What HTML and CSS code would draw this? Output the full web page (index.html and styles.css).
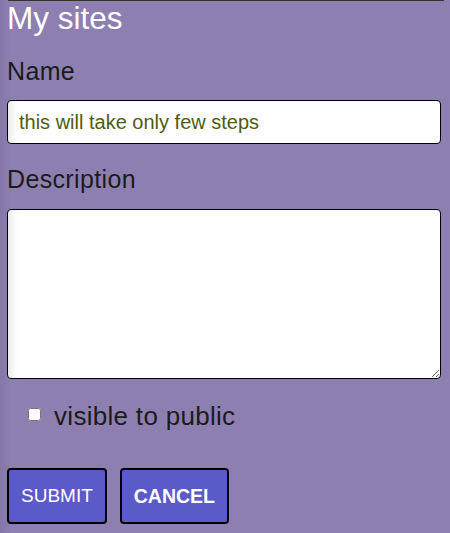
FILE: index.html
```html
<!DOCTYPE html>
<html lang="en">
<head>
<meta charset="utf-8">
<title>My sites</title>
<link rel="stylesheet" href="styles.css">
</head>
<body>
<div class="topline"></div>
<main class="page">
  <h1 class="title">My sites</h1>
  <form class="form">
    <label class="label label-name" for="name">Name</label>
    <input class="field" id="name" type="text" value="this will take only few steps">
    <label class="label label-desc" for="desc">Description</label>
    <textarea class="field area" id="desc"></textarea>
    <div class="check-row">
      <input class="check" id="public" type="checkbox">
      <label class="check-label" for="public">visible to public</label>
    </div>
    <div class="buttons">
      <button class="btn" type="submit">SUBMIT</button>
      <button class="btn btn-bold" type="button">CANCEL</button>
    </div>
  </form>
</main>
</body>
</html>
```

FILE: styles.css
```css
html, body {
  margin: 0;
  padding: 0;
}

body {
  width: 450px;
  height: 533px;
  overflow: hidden;
  background: linear-gradient(to right, #8478a8 0px, #8d80b1 12px, #8d80b1 100%);
  font-family: "Liberation Sans", Arial, Helvetica, sans-serif;
  color: #1b1b1b;
}

.topline {
  height: 1px;
  margin: 0 6px 0 8px;
  background: #333333;
}

.page {
  padding: 0 9px 0 7px;
}

.title {
  margin: 0;
  font-size: 31.5px;
  line-height: 34px;
  font-weight: normal;
  color: #ffffff;
}

.form {
  display: flex;
  flex-direction: column;
}

.label {
  display: block;
  font-size: 25px;
  line-height: 30px;
  letter-spacing: 0.35px;
}

.label-name {
  margin-top: 21px;
}

.label-desc {
  margin-top: 20px;
}

.field {
  box-sizing: border-box;
  width: 434px;
  height: 44px;
  margin: 14px 0 0 0;
  padding: 0 11px;
  border: 1px solid #000000;
  border-radius: 4px;
  background: #ffffff;
  box-shadow: inset 10px 0 10px -8px rgba(0, 0, 0, 0.12);
  font-family: "Liberation Sans", Arial, Helvetica, sans-serif;
  font-size: 20px;
  color: #4f5c0f;
  outline: none;
}

.area {
  height: 170px;
  margin-top: 15px;
  resize: vertical;
  display: block;
}

.check-row {
  display: flex;
  align-items: center;
  margin-top: 22px;
  height: 30px;
  padding-left: 21px;
}

.check {
  width: 13px;
  height: 13px;
  margin: 0 13px 4px 0;
}

.check-label {
  font-size: 26px;
  line-height: 30px;
  letter-spacing: 0.3px;
}

.buttons {
  display: flex;
  gap: 13px;
  margin-top: 37px;
}

.btn {
  box-sizing: border-box;
  height: 56px;
  padding: 0 12px;
  border: 2px solid #000000;
  border-radius: 4px;
  background: #5a5ac8;
  color: #ffffff;
  font-family: "Liberation Sans", Arial, Helvetica, sans-serif;
  font-size: 19px;
  font-weight: normal;
}

.btn-bold {
  font-weight: bold;
  font-size: 19.5px;
}
```
